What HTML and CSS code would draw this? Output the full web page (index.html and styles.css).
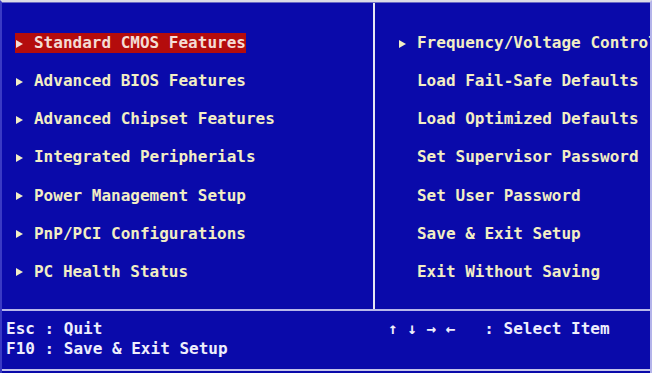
FILE: index.html
```html
<!DOCTYPE html>
<html>
<head>
<meta charset="utf-8">
<link rel="stylesheet" href="styles.css">
</head>
<body>
<div class="screen">
  <div class="main">
    <div class="panel panel-left">
      <div class="item selected"><span class="mark"><span class="tri"></span></span>Standard CMOS Features</div>
      <div class="item"><span class="mark"><span class="tri"></span></span>Advanced BIOS Features</div>
      <div class="item"><span class="mark"><span class="tri"></span></span>Advanced Chipset Features</div>
      <div class="item"><span class="mark"><span class="tri"></span></span>Integrated Peripherials</div>
      <div class="item"><span class="mark"><span class="tri"></span></span>Power Management Setup</div>
      <div class="item"><span class="mark"><span class="tri"></span></span>PnP/PCI Configurations</div>
      <div class="item"><span class="mark"><span class="tri"></span></span>PC Health Status</div>
    </div>
    <div class="panel panel-right">
      <div class="item"><span class="mark"><span class="tri"></span></span>Frequency/Voltage Control</div>
      <div class="item"><span class="mark"></span>Load Fail-Safe Defaults</div>
      <div class="item"><span class="mark"></span>Load Optimized Defaults</div>
      <div class="item"><span class="mark"></span>Set Supervisor Password</div>
      <div class="item"><span class="mark"></span>Set User Password</div>
      <div class="item"><span class="mark"></span>Save &amp; Exit Setup</div>
      <div class="item"><span class="mark"></span>Exit Without Saving</div>
    </div>
  </div>
  <div class="footer">
    <div class="keys keys-left">
      <div class="line">Esc : Quit</div>
      <div class="line">F10 : Save &amp; Exit Setup</div>
    </div>
    <div class="keys">
      <div class="line">↑ ↓ → ←   : Select Item</div>
    </div>
  </div>
</div>
</body>
</html>
```
FILE: styles.css
```css
html, body {
  margin: 0;
  padding: 0;
  background: #0a0aaa;
}

.screen {
  width: 652px;
  height: 373px;
  box-sizing: border-box;
  background: #0a0aaa;
  border-top: 2px solid #dcdce6;
  border-left: 2px solid #3a3ac4;
  border-right: 2px solid #b4b4ea;
  padding-bottom: 2px;
  font-family: "DejaVu Sans Mono", "Liberation Mono", monospace;
  font-weight: bold;
  font-size: 16px;
  overflow: hidden;
}

.main {
  height: 309px;
  box-sizing: border-box;
  display: flex;
  border-top: 1px solid #6a6ac4;
  border-bottom: 2px solid #b8b8ea;
}

.panel {
  display: flex;
  flex-direction: column;
  align-items: flex-start;
  gap: 18.17px;
  padding-top: 30px;
  box-sizing: border-box;
  white-space: nowrap;
  overflow: hidden;
}

.panel-left {
  width: 373px;
  padding-left: 12.8px;
  border-right: 2px solid #e6e6f2;
}

.panel-right {
  flex: 1;
  padding-left: 22.8px;
}

.item {
  height: 20px;
  line-height: 20px;
  color: #f2eec4;
  display: flex;
  align-items: center;
}

.item.selected {
  background: #b40c0c;
  color: #f4dcd4;
}

.mark {
  display: inline-flex;
  align-items: center;
  width: 19.2px;
  height: 20px;
  flex: none;
}

.tri {
  display: block;
  width: 0;
  height: 0;
  margin-left: 1.5px;
  margin-top: 1px;
  border-left: 7px solid currentColor;
  border-top: 4.5px solid transparent;
  border-bottom: 4.5px solid transparent;
}

.footer {
  height: 60px;
  box-sizing: border-box;
  display: flex;
  padding-top: 8px;
  padding-left: 4px;
  border-bottom: 2px solid #c4c4ea;
  color: #eeeefc;
}

.keys-left {
  width: 382px;
  flex: none;
}

.line {
  height: 20px;
  line-height: 20px;
  white-space: pre;
}
```
